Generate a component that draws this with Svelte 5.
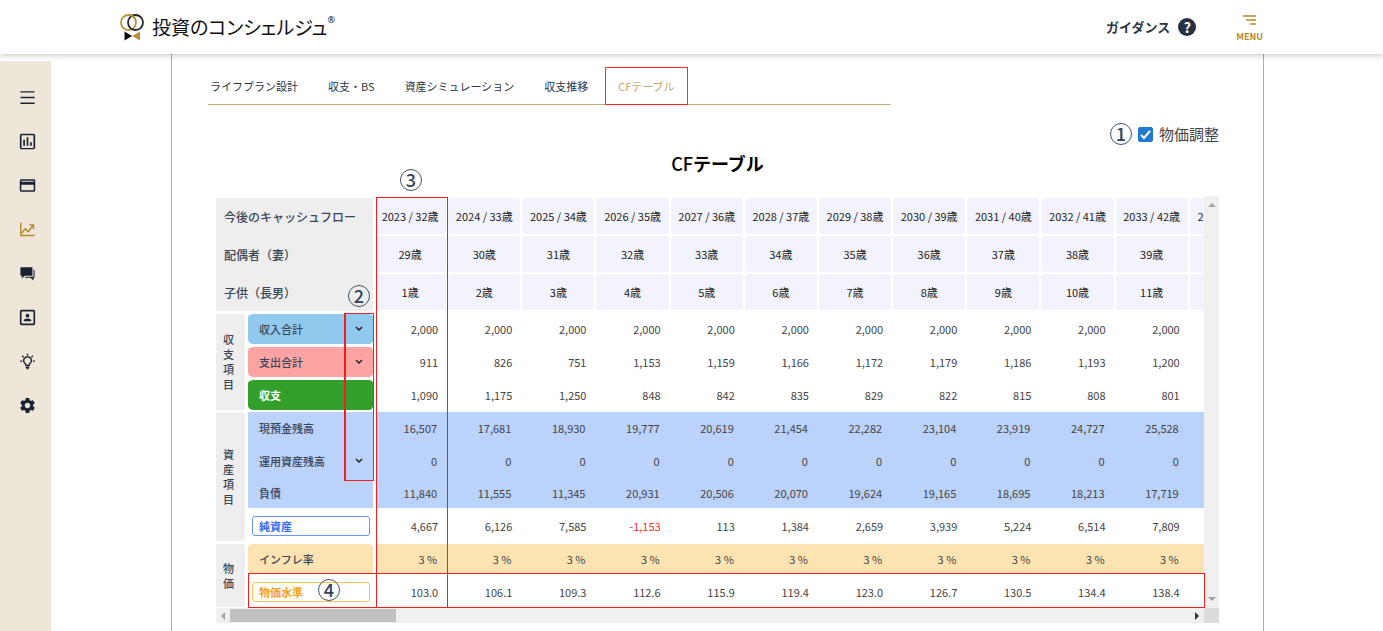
<script>
  const tabs = ['ライフプラン設計', '収支・BS', '資産シミュレーション', '収支推移', 'CFテーブル'];
  const years = Array.from({ length: 12 }, (_, i) => ({ year: 2023 + i, age: 32 + i, spouse: 29 + i, child: 1 + i }));
  const rows = [
    { label: '収入合計', kind: 'income', chevron: true, group: '収支項目', span: 3,
      values: ['2,000', '2,000', '2,000', '2,000', '2,000', '2,000', '2,000', '2,000', '2,000', '2,000', '2,000'] },
    { label: '支出合計', kind: 'expense', chevron: true,
      values: ['911', '826', '751', '1,153', '1,159', '1,166', '1,172', '1,179', '1,186', '1,193', '1,200'] },
    { label: '収支', kind: 'balance',
      values: ['1,090', '1,175', '1,250', '848', '842', '835', '829', '822', '815', '808', '801'] },
    { label: '現預金残高', kind: 'asset first', group: '資産項目', span: 4,
      values: ['16,507', '17,681', '18,930', '19,777', '20,619', '21,454', '22,282', '23,104', '23,919', '24,727', '25,528'] },
    { label: '運用資産残高', kind: 'asset', chevron: true,
      values: ['0', '0', '0', '0', '0', '0', '0', '0', '0', '0', '0'] },
    { label: '負債', kind: 'asset last',
      values: ['11,840', '11,555', '11,345', '20,931', '20,506', '20,070', '19,624', '19,165', '18,695', '18,213', '17,719'] },
    { label: '純資産', kind: 'net',
      values: ['4,667', '6,126', '7,585', '-1,153', '113', '1,384', '2,659', '3,939', '5,224', '6,514', '7,809'] },
    { label: 'インフレ率', kind: 'inflation', group: '物価', span: 2,
      values: Array(11).fill('3 %') },
    { label: '物価水準', kind: 'price',
      values: ['103.0', '106.1', '109.3', '112.6', '115.9', '119.4', '123.0', '126.7', '130.5', '134.4', '138.4'] }
  ];
  let adjusted = $state(true);
</script>

<header class="topbar">
  <a class="logo" href="#top">
    <svg width="24" height="27" viewBox="0 0 24 27" aria-hidden="true">
      <circle cx="8.500" cy="8.500" r="7.500" fill="none" stroke="#b8923a" stroke-width="1.800" />
      <circle cx="15.500" cy="8.500" r="7.500" fill="none" stroke="#26262a" stroke-width="1.800" />
      <path d="M9.200 1.200A7.500 7.500 0 0 1 15.900 7.500" fill="none" stroke="#b8923a" stroke-width="1.800" />
      <path d="M4.500 17.500L12.200 22L4.500 26.500Z" fill="#111" />
      <path d="M20 17.500L12.200 22L20 26.500Z" fill="#b8923a" />
    </svg>
    <span class="brand">投資のコンシェルジュ<sup>®</sup></span>
  </a>
  <div class="actions">
    <a class="guide" href="#guide">ガイダンス <span class="help">?</span></a>
    <button class="menu" type="button">
      <svg width="14" height="11" viewBox="0 0 14 11" aria-hidden="true">
        <path d="M0 1h13M3 5h10M7 9h6" stroke="#b48a2a" stroke-width="1.600" />
      </svg>
      MENU
    </button>
  </div>
</header>

<div class="page">
  <nav class="side" aria-label="サイド">
    <button type="button" aria-label="一覧">
      <svg viewBox="0 0 24 24"><path d="M2 4h20M2 12h20M2 20h20" class="line" /></svg>
    </button>
    <button type="button" aria-label="集計">
      <svg viewBox="2 2 20 20"><path d="M9 17H7v-7h2v7zm4 0h-2V7h2v10zm4 0h-2v-4h2v4zm2 2.500H5V4.500h14v15zM19 3H5c-1.100 0-2 .9-2 2v14c0 1.100.9 2 2 2h14c1.100 0 2-.9 2-2V5c0-1.100-.9-2-2-2z" /></svg>
    </button>
    <button type="button" aria-label="カード">
      <svg viewBox="1 1 22 22"><path d="M20 4H4c-1.110 0-2 .89-2 2v12c0 1.110.89 2 2 2h16c1.110 0 2-.89 2-2V6c0-1.110-.89-2-2-2zm0 14H4v-7h16v7zm0-11H4V6h16v1z" /></svg>
    </button>
    <button type="button" class="current" aria-label="推移">
      <svg viewBox="0 0 24 24"><path d="M2.500 2v18.500H22M4 17l5-6 4 4 7-9M14.500 5.500h6v6" class="line" /></svg>
    </button>
    <button type="button" aria-label="相談">
      <svg viewBox="0 0 24 24"><path d="M2 3h17v12H8l-4 4v-4H2zM20.500 7H22v11h-1.500v4L16 18H8.500v-1.500h12z" /></svg>
    </button>
    <button type="button" aria-label="プロフィール">
      <svg viewBox="2 2 20 20"><rect x="4" y="4" width="16" height="16" rx="1" class="line" /><circle cx="12" cy="9.800" r="2.200" /><path d="M7.500 16.500v-1c0-1.500 3-2.300 4.500-2.300s4.500.8 4.500 2.300v1z" /></svg>
    </button>
    <button type="button" aria-label="ヒント">
      <svg viewBox="0 0 24 24"><path d="M9.500 17.500v-1.800a5.500 5.500 0 1 1 5 0v1.800zM9.500 20h5M10.500 22h3M12 1v2.500M1.500 11.500h3M19.500 11.500h3M4.500 4l2 2M19.500 4l-2 2" class="line" /></svg>
    </button>
    <button type="button" aria-label="設定">
      <svg viewBox="1 1 22 22"><path d="M19.140 12.940c.04-.3.06-.61.06-.94 0-.32-.02-.64-.07-.94l2.030-1.580c.18-.14.23-.41.12-.61l-1.920-3.320c-.12-.22-.37-.29-.59-.22l-2.390.96c-.5-.38-1.030-.7-1.620-.94l-.36-2.540c-.04-.24-.24-.41-.48-.41h-3.840c-.24 0-.43.17-.47.41l-.36 2.540c-.59.24-1.130.57-1.620.94l-2.390-.96c-.22-.08-.47 0-.59.22L2.740 8.870c-.12.21-.08.47.12.61l2.030 1.580c-.05.3-.09.63-.09.94s.02.64.07.94l-2.030 1.580c-.18.14-.23.41-.12.61l1.920 3.320c.12.22.37.29.59.22l2.390-.96c.5.38 1.030.7 1.620.94l.36 2.540c.05.24.24.41.48.41h3.840c.24 0 .44-.17.47-.41l.36-2.540c.59-.24 1.130-.56 1.620-.94l2.390.96c.22.08.47 0 .59-.22l1.920-3.320c.12-.22.07-.47-.12-.61l-2.010-1.580zM12 15.600c-1.980 0-3.600-1.620-3.600-3.600s1.620-3.600 3.600-3.600 3.600 1.620 3.600 3.600-1.620 3.600-3.600 3.600z" /></svg>
    </button>
  </nav>

  <main class="panel">
    <nav class="tabs" aria-label="タブ">
      {#each tabs as tab, i}
        <a href="#tab{i}" class:active={i === 4}>{tab}</a>
      {/each}
    </nav>

    <div class="adjust">
      <span class="num">1</span>
      <label>
        <input type="checkbox" bind:checked={adjusted} />
        <svg class="tick" viewBox="0 0 15 15" aria-hidden="true"><path d="M3 8l3 3 6-7" /></svg>
        物価調整
      </label>
    </div>

    <h1><span>CF</span>テーブル</h1>

    <div class="scroller">
      <div class="view">
        <div class="clip">
          <table>
            <colgroup>
              <col class="c-group" /><col class="c-label" />
              {#each years as y}<col />{/each}
            </colgroup>
            <thead>
              <tr>
                <th colspan="2" class="head">今後のキャッシュフロー</th>
                {#each years as y}<th>{y.year} / {y.age}歳</th>{/each}
              </tr>
              <tr>
                <th colspan="2" class="head">配偶者（妻）</th>
                {#each years as y}<th>{y.spouse}歳</th>{/each}
              </tr>
              <tr>
                <th colspan="2" class="head end">子供（長男）</th>
                {#each years as y}<th>{y.child}歳</th>{/each}
              </tr>
            </thead>
            <tbody>
              {#each rows as row}
                <tr class={row.kind}>
                  {#if row.group}
                    <th class="group" rowspan={row.span} scope="rowgroup"><span>{row.group}</span></th>
                  {/if}
                  <th class="label" scope="row">
                    <div>
                      <span>{row.label}</span>
                      {#if row.chevron}
                        <button type="button" aria-label="{row.label}を開く">
                          <svg width="8" height="6" viewBox="0 0 8 6"><path d="M1 1l3 3 3-3" /></svg>
                        </button>
                      {/if}
                    </div>
                  </th>
                  {#each row.values as v}
                    <td class:minus={v.startsWith('-')}>{v}</td>
                  {/each}
                  <td></td>
                </tr>
              {/each}
            </tbody>
          </table>
        </div>
        <div class="mark toggles"></div>
        <div class="mark column"></div>
        <div class="mark bottom-row"></div>
        <span class="num two">2</span>
        <span class="num three">3</span>
        <span class="num four">4</span>
      </div>
      <div class="vbar"><i class="up"></i><i class="down"></i></div>
      <div class="hbar"><i class="left"></i><div class="thumb"></div><i class="right"></i></div>
      <div class="corner"></div>
    </div>
  </main>
</div>

<style>
  :global(body) {
    font-family: 'Noto Sans CJK JP', sans-serif;
    font-size: 11px;
    color: #2c3645;
    background: #fff;
    overflow: hidden;
  }
  a { color: inherit; text-decoration: none; }
  button { border: 0; padding: 0; background: none; font-family: inherit; color: inherit; }

  .topbar {
    position: relative;
    z-index: 5;
    display: flex;
    align-items: center;
    justify-content: space-between;
    height: 54px;
    padding: 0 120px;
    box-sizing: border-box;
    background: #fff;
    box-shadow: 0 1px 6px rgba(0, 0, 0, 0.25);
  }
  .logo { display: flex; align-items: center; gap: 8px; }
  .brand { display: flex; font-size: 19px; line-height: 26px; color: #111; font-feature-settings: 'palt'; }
  .brand sup { font-family: 'Noto Sans', sans-serif; font-size: 9px; line-height: 12px; }
  .actions { display: flex; align-items: center; gap: 40px; }
  .guide { display: flex; align-items: center; gap: 8px; font-size: 13px; font-weight: 700; line-height: 18px; }
  .help {
    width: 18px;
    height: 18px;
    border-radius: 50%;
    background: #263142;
    color: #fff;
    text-align: center;
    font-size: 14px;
  }
  .menu {
    display: flex;
    flex-direction: column;
    align-items: center;
    gap: 5px;
    padding-top: 3px;
    font-size: 9px;
    line-height: 12px;
    font-weight: 700;
    color: #b48a2a;
  }

  .page { display: flex; min-height: calc(100vh - 54px); }
  .side {
    width: 51px;
    flex: none;
    margin-top: 7px;
    padding-top: 14px;
    box-sizing: border-box;
    background: #eee6d8;
    color: #1a2233;
  }
  .side button { display: flex; align-items: center; justify-content: center; width: 54px; height: 44px; }
  .side svg { width: 17px; height: 17px; fill: currentColor; }
  .side .line { fill: none; stroke: currentColor; stroke-width: 2; }
  .side .current { color: #b48a2a; }

  .panel {
    flex: 1;
    min-width: 0;
    margin: 0 119px 0 120px;
    padding: 0 36px;
    border: solid #c6ab7e;
    border-width: 0 1px;
  }
  .tabs {
    display: flex;
    align-items: center;
    gap: 30px;
    width: 67%;
    height: 51px;
    padding-left: 2px;
    padding-top: 14px;
    box-sizing: border-box;
    border-bottom: 1px solid #c6ab7e;
    line-height: 36px;
  }
  .tabs .active { position: relative; color: #c4a671; }
  .tabs .active::after {
    content: '';
    position: absolute;
    inset: -1px -13px -1px;
    border: 1px solid #ff2a2a;
  }
  .adjust {
    display: flex;
    justify-content: flex-end;
    align-items: center;
    gap: 6px;
    margin-top: 17px;
    padding-right: 8px;
    font-size: 15px;
    line-height: 24px;
    color: #444;
  }
  .adjust label { display: grid; grid-template-columns: 15px auto; align-items: center; column-gap: 6px; }
  .adjust input { appearance: none; grid-area: 1 / 1; width: 15px; height: 15px; margin: 0; border: 1px solid #1e7bd0; border-radius: 2px; }
  .adjust input:checked { background: #1e7bd0; }
  .tick { grid-area: 1 / 1; width: 15px; height: 15px; pointer-events: none; }
  .tick path { fill: none; stroke: #fff; stroke-width: 2; }
  .num {
    width: 22px;
    height: 22px;
    box-sizing: border-box;
    border: 1px solid #44546a;
    border-radius: 50%;
    text-align: center;
    font-size: 18px;
    line-height: 18px;
    font-weight: 500;
    color: #34435a;
  }
  h1 { margin: 4px 0 19px; text-align: center; font-size: 18px; line-height: 27px; font-weight: 700; color: #000; }
  h1 span { font-weight: 500; }

  .scroller { display: grid; grid-template-columns: minmax(0, 1fr) 15px; margin: 0 8px; }
  .view { position: relative; padding-top: 2px; }
  .clip { overflow: hidden; }
  table { width: calc(100% + 60px); table-layout: fixed; border-collapse: separate; border-spacing: 0; }
  .c-group { width: 32px; }
  .c-label { width: 126px; }
  th, td { padding: 0; border: 0 solid #fff; line-height: 16px; white-space: nowrap; background-clip: padding-box; }
  thead th {
    height: 38px;
    box-sizing: border-box;
    border-width: 0 2px 2px 0;
    border-radius: 4px;
    background-color: #f2f3fc;
    font-weight: 400;
    color: #222;
  }
  thead .head {
    border-width: 0 1px 0 0;
    border-radius: 0;
    padding-left: 8px;
    background-color: #eee;
    text-align: left;
    font-size: 12px;
    font-weight: 500;
    color: #3a4656;
  }
  thead .end { border-bottom-width: 1px; border-radius: 0 0 4px 0; }
  tbody th, tbody td { height: 33px; box-sizing: border-box; border-width: 2px 0 1px; }
  td { text-align: right; padding-right: 10px; color: #444; }
  .minus { color: #f02c2c; }
  .head + th, .label + td { border-left-width: 3px; }
  .head + th { padding-right: 3px; }
  .group { border-right-width: 3px; border-radius: 0 5px 5px 0; background-color: #eee; color: #3a4656; font-weight: 500; }
  .group span { display: block; width: 1em; margin: 0 auto; padding-right: 4px; line-height: 15px; white-space: normal; }
  .label { border-right-width: 1px; border-radius: 5px; text-align: left; font-weight: 500; color: #3a4656; }
  .label div { display: flex; align-items: center; justify-content: space-between; padding: 0 10px 0 11px; }
  .label button { display: flex; }
  .label button path { fill: none; stroke: #222; stroke-width: 1.500; }
  .income .label { background-color: #91c8ee; }
  .expense .label { background-color: #fca3a4; }
  .balance .label { background-color: #33a02c; color: #fff; font-weight: 700; }
  .asset .label, .asset td { border-top-width: 0; border-bottom-width: 0; border-radius: 0; background-color: #bbd2fb; }
  .asset td, .inflation td { padding-right: 11px; }
  .first .label, .first td { border-top-width: 1px; }
  .last .label, .last td { height: 32px; border-bottom-width: 1px; }
  .inflation .label, .inflation td { background-color: #fce3b2; }
  .net .label div, .price .label div {
    width: 118px;
    height: 20px;
    box-sizing: border-box;
    margin-left: 4px;
    padding: 0 6px;
    border: 1px solid #6b95f5;
    border-radius: 3px;
    font-weight: 700;
    color: #2f6bf2;
  }
  .price .label div { border-color: #f9c04f; color: #f5a11c; }

  .mark { position: absolute; box-sizing: border-box; border: 1px solid #f51d1d; }
  .toggles { left: 128px; top: 117px; width: 30px; height: 168px; border-left-width: 2px; }
  .column { left: 160px; top: 1px; width: 72px; bottom: 0; }
  .bottom-row { left: 32px; right: -1px; height: 35px; bottom: 0; }
  .two, .three, .four { position: absolute; }
  .two { left: 132px; top: 89px; }
  .three { left: 184px; top: -27px; }
  .four { left: 102px; bottom: 7px; }

  .vbar { display: flex; flex-direction: column; justify-content: space-between; align-items: center; padding: 7px 0; background: #f0f0f0; }
  .hbar { display: flex; align-items: center; justify-content: space-between; height: 15px; padding: 0 5px; background: #f0f0f0; }
  .thumb { width: 17%; height: 13px; margin-right: auto; margin-left: 5px; background: #c1c1c1; }
  .corner { background: #dcdcdc; }
  i { border: 4px solid transparent; }
  .up { border-top: 0; border-bottom-color: #a3a3a3; }
  .down { border-bottom: 0; border-top-color: #a3a3a3; }
  .left { border-left: 0; border-right-color: #a3a3a3; }
  .right { border-right: 0; border-left-color: #333; }
</style>
